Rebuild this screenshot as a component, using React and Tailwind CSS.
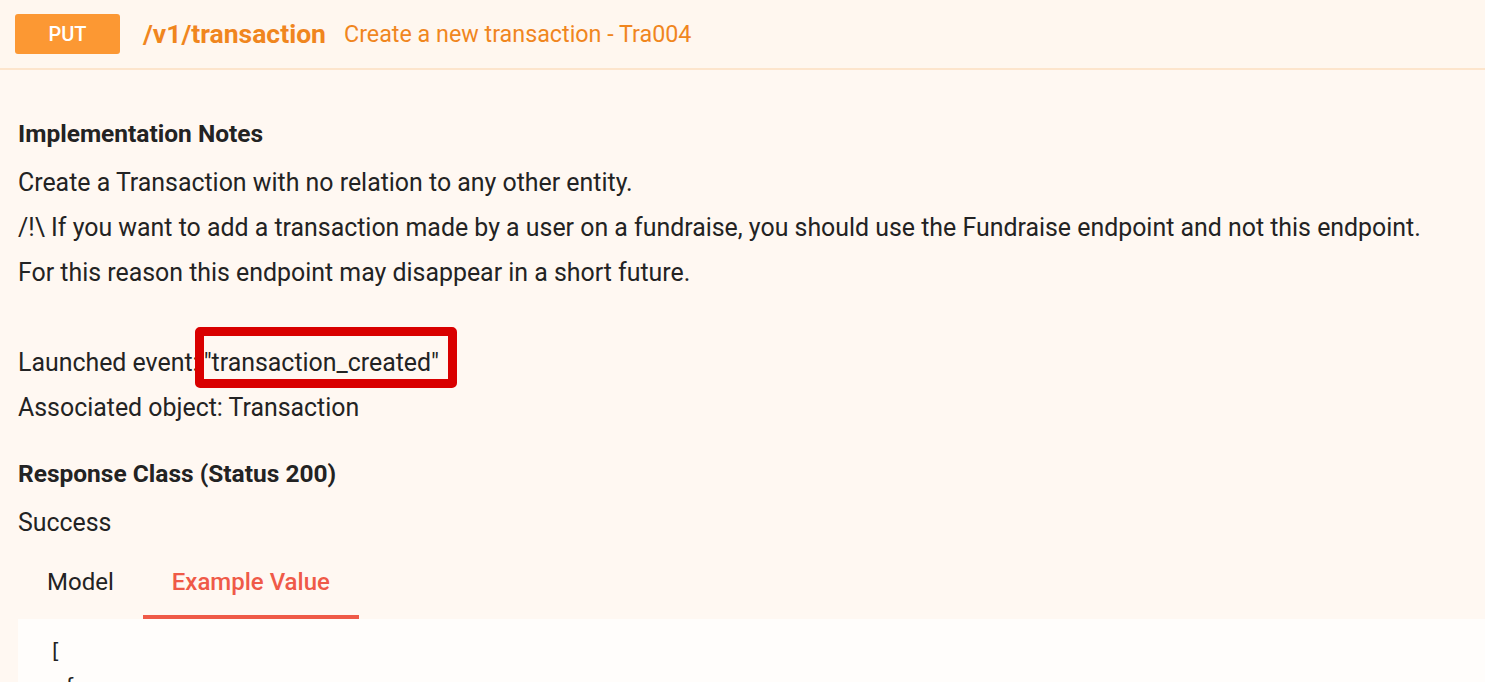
export default function App() {
  return (
    <div className="w-[1485px] h-[682px] overflow-hidden bg-[#fff8f2] text-[#232323]" style={{ fontFamily: "Roboto, 'Liberation Sans', sans-serif" }}>
      <div className="h-[70px] flex items-start pt-[14px] border-b-2 border-[#fde5cc] bg-[#fff7ef]">
        <div className="ml-[15px] w-[105px] h-[40px] rounded-[3px] bg-[#fc9833] text-white flex items-center justify-center text-[20px] font-medium">PUT</div>
        <div className="ml-[23px] h-[40px] flex items-center text-[26.5px] font-bold text-[#f0861e]">/v1/transaction</div>
        <div className="ml-[18px] h-[40px] flex items-center text-[23.3px] text-[#f0861e]">Create a new transaction - Tra004</div>
      </div>
      <div className="pl-[18px] pt-[46px]">
        <div className="text-[24.5px] font-bold leading-[36px]">Implementation Notes</div>
        <div className="text-[24.9px] leading-[45px] mt-[8px]">
          <div>Create a Transaction with no relation to any other entity.</div>
          <div>/!\ If you want to add a transaction made by a user on a fundraise, you should use the Fundraise endpoint and not this endpoint.</div>
          <div>For this reason this endpoint may disappear in a short future.</div>
          <div className="h-[45px]"></div>
          <div className="flex">
            <span>Launched event:</span>
            <span className="relative inline-block ml-[5px]">
              "transaction_created"
              <span className="absolute left-[-9px] right-[-18px] top-[-13px] bottom-[-3px] border-[9px] border-[#d90000] rounded-[5px]"></span>
            </span>
          </div>
          <div>Associated object: Transaction</div>
        </div>
        <div className="text-[24.5px] font-bold leading-[36px] mt-[26px]">Response Class (Status 200)</div>
        <div className="text-[24.9px] leading-[45px] mt-[8px]">Success</div>
        <div className="flex text-[24px]">
          <div className="px-[29px] h-[74px] flex items-center pt-[4px] border-b-[4px] border-transparent">Model</div>
          <div className="px-[29px] h-[74px] flex items-center pt-[4px] text-[#ef5a48] font-medium border-b-[4px] border-[#ef5a48]">Example Value</div>
        </div>
        <div className="bg-[#fffdfb] h-[80px] pl-[31px] pt-[15px] text-[21px] leading-[35px]" style={{ fontFamily: "'DejaVu Sans Mono', monospace" }}>
          <div>[</div>
          <div className="pl-[14px]">{"{"}</div>
        </div>
      </div>
    </div>
  );
}
